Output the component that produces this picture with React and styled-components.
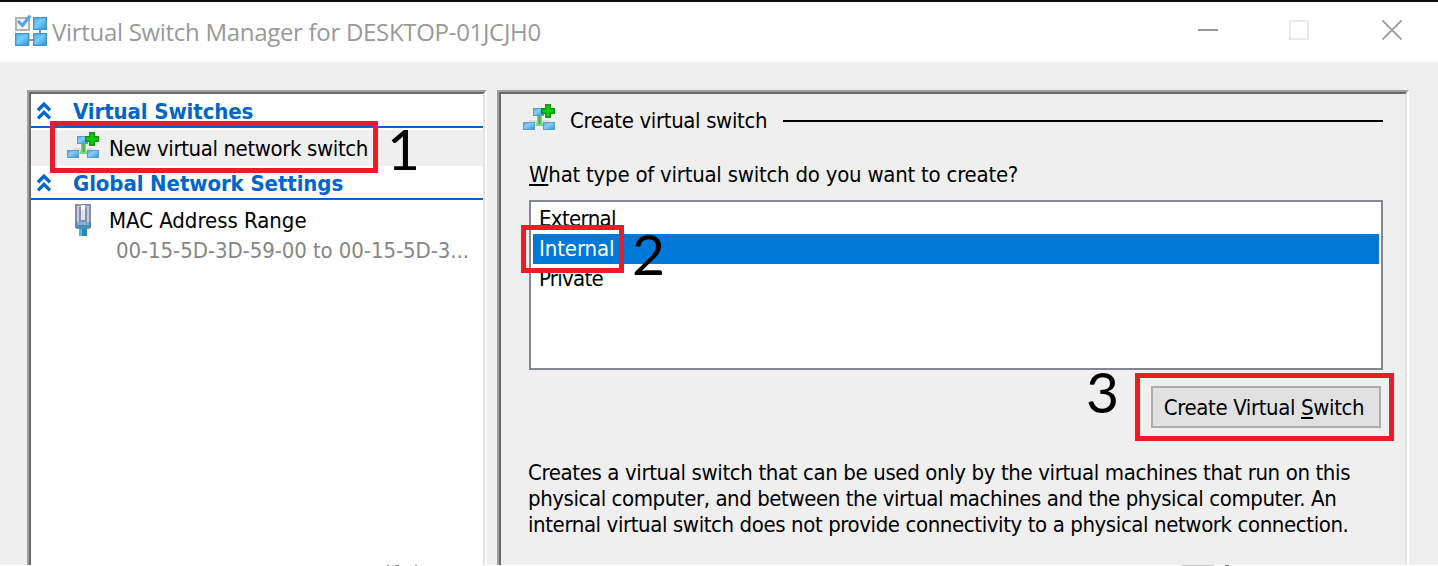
import React from "react";
import styled, { createGlobalStyle } from "styled-components";

const GlobalStyle = createGlobalStyle`
  * { box-sizing: border-box; }
  body { margin: 0; background: #fff; overflow: hidden; }
  svg { display: block; flex: none; }
`;

const Window = styled.div`
  position: relative;
  width: 1438px;
  height: 566px;
  overflow: hidden;
  display: flex;
  flex-direction: column;
  background: #fff;
  color: #000;
  font: 22px/26px "DejaVu Sans Condensed", "DejaVu Sans", sans-serif;
`;

const TitleBar = styled.header`
  flex: none;
  height: 62px;
  display: flex;
  align-items: flex-start;
  padding: 13px 36px 0 15px;
  border-top: 2px solid #0c0c0c;
`;

const Title = styled.h1`
  flex: 1;
  margin: 0 0 0 5px;
  font: 400 24px/34px "Open Sans", sans-serif;
  letter-spacing: -0.3px;
  color: #999;
`;

const Controls = styled.div`
  display: flex;
  gap: 71px;
  margin-top: 5px;

  svg:last-child { margin-left: 2px; }
`;

const Body = styled.main`
  height: 503px;
  flex: none;
  overflow: hidden;
  display: flex;
  gap: 10px;
  padding: 28px 29px 0 27px;
  background: #efefef;
`;

const Frame = styled.section`
  flex: none;
  width: ${(p) => p.$width}px;
  height: 520px;
  border: 2px solid;
  border-color: #a0a0a0 #fff #fff #a0a0a0;
`;

const FrameInner = styled.div`
  height: 100%;
  border: 2px solid;
  border-color: #696969 #e3e3e3 #e3e3e3 #696969;
  background: ${(p) => p.$fill};
`;

const SectionHeader = styled.h2`
  display: flex;
  align-items: flex-start;
  height: 34px;
  margin: 0;
  padding: 5px 0 0 6px;
  border-bottom: 2px solid #0066cc;
  color: #0066cc;
  font-size: 22px;
  line-height: 26px;
  font-weight: bold;
  letter-spacing: -0.1px;

  svg { margin-top: 3px; }
`;

const HeaderLabel = styled.span`
  margin-left: 22px;
`;

const TreeItem = styled.div`
  display: flex;
  height: 36px;
  margin-top: 2px;
  padding: 2px 0 0 36px;
  background: ${(p) => (p.$selected ? "#efefef" : "transparent")};
`;

const IconCell = styled.span`
  display: flex;
  justify-content: center;
  width: 32px;
`;

const TreeLabel = styled.span`
  margin: 4px 0 0 10px;
  letter-spacing: ${(p) => p.$track}px;
  white-space: nowrap;
`;

const TreeDetail = styled.div`
  padding: 0 0 0 85px;
  color: #868686;
  letter-spacing: -0.08px;
  white-space: nowrap;
`;

const GroupTitle = styled.div`
  display: flex;
  align-items: flex-start;
  padding: 10px 22px 0 22px;
  height: 67px;
`;

const GroupLabel = styled.span`
  width: 213px;
  margin: 4px 0 0 15px;
  letter-spacing: -0.36px;
`;

const Rule = styled.span`
  flex: 1;
  height: 2px;
  margin-top: 16px;
  background: #000;
`;

const Question = styled.label`
  display: block;
  height: 39px;
  padding: 1px 0 0 28px;
  letter-spacing: -0.24px;
`;

const Mnemonic = styled.span`
  text-decoration: underline;
  text-decoration-thickness: 2px;
  text-underline-offset: 2px;
  text-decoration-skip-ink: none;
`;

const ListBox = styled.div`
  width: 854px;
  height: 170px;
  margin-left: 28px;
  padding: 2px;
  border: 2px solid #828790;
  background: #fff;
`;

const Option = styled.div`
  height: 30px;
  padding-left: 6px;
  line-height: 30px;
  letter-spacing: ${(p) => p.$track}px;
  color: ${(p) => (p.$selected ? "#fff" : "#000")};
  background: ${(p) => (p.$selected ? "#0078d7" : "#fff")};
`;

const Actions = styled.div`
  display: flex;
  justify-content: flex-end;
  padding: 16px 24px 0 0;
`;

const Button = styled.button`
  width: 230px;
  height: 42px;
  padding: 2px 4px 0 0;
  border: 2px solid #adadad;
  background: #e1e1e1;
  color: #000;
  font: inherit;
  letter-spacing: -0.38px;
  white-space: nowrap;
`;

const Description = styled.p`
  margin: 32px 0 0 27px;
  white-space: nowrap;
`;

const Line = styled.span`
  display: block;
  letter-spacing: ${(p) => p.$track}px;
`;

const Highlight = styled.div`
  position: absolute;
  left: ${(p) => p.$x}px;
  top: ${(p) => p.$y}px;
  width: ${(p) => p.$w}px;
  height: ${(p) => p.$h}px;
  border: 5px solid #ed1c24;
`;

const Step = styled.div`
  position: absolute;
  left: ${(p) => p.$x}px;
  top: ${(p) => p.$y}px;
  font: 57px/60px Lato, sans-serif;
`;

const BottomEdge = styled.footer`
  flex: none;
  height: 1px;
  display: flex;
`;

const Speck = styled.span`
  width: ${(p) => p.$w}px;
  margin-left: ${(p) => p.$gap}px;
  background: ${(p) => p.$c};
`;

const AppIcon = () => (
  <svg width="32" height="32" viewBox="0 0 32 32">
    <defs>
      <linearGradient id="tile" x1="0" y1="0" x2="1" y2="1">
        <stop offset="0" stopColor="#4fb4f0" />
        <stop offset=".45" stopColor="#77cbfb" />
        <stop offset="1" stopColor="#2795e0" />
      </linearGradient>
    </defs>
    <path d="M25 14v5M13 25h6" stroke="#929292" strokeWidth="2" />
    <rect x="1" y="3" width="13" height="12" fill="#f1f1f1" stroke="#b2b2b2" strokeWidth="2" />
    <g fill="url(#tile)" stroke="#4794c4" strokeWidth="1.4">
      <rect x="18.7" y="2.7" width="12.6" height="11.6" />
      <rect x=".7" y="18.7" width="13" height="11.6" />
      <rect x="18.7" y="18.7" width="12.6" height="11.6" />
    </g>
    <path d="M3 6l4.5 4.5L15.2 .5" fill="none" stroke="#4ba3ee" strokeWidth="3" />
  </svg>
);

const SwitchIcon = () => (
  <svg width="32" height="28" viewBox="0 0 32 28">
    <defs>
      <linearGradient id="node" x1="0" y1="0" x2="1" y2="1">
        <stop offset="0" stopColor="#4aa3e0" />
        <stop offset=".4" stopColor="#8accf5" />
        <stop offset="1" stopColor="#1e94e0" />
      </linearGradient>
    </defs>
    <path d="M6 17.5h20" stroke="#dcdcdc" strokeWidth="3" />
    <path d="M14 12h5v6l2 4h-9l2-4z" fill="#7fd47c" />
    <path d="M16.5 12v8" stroke="#47ae48" strokeWidth="2" />
    <g fill="url(#node)" stroke="#5b9fc8" strokeWidth="1">
      <rect x="10.5" y="4.5" width="10" height="7" />
      <rect x=".5" y="18.5" width="11" height="7" />
      <rect x="20.5" y="18.5" width="11" height="7" />
    </g>
    <path d="M22 0h6v4h4v6h-4v4h-6v-4h-4V4h4z" fill="#129612" />
    <path d="M24 2h2v4h4v2h-4v4h-2V8h-4V6h4z" fill="#0bd20b" stroke="#0bd20b" />
  </svg>
);

const PlugIcon = () => (
  <svg width="16" height="32" viewBox="0 0 16 32">
    <path d="M4 24h8v8H4z" fill="#258dbd" />
    <path d="M4 24h3v8H4z" fill="#5ab4d5" />
    <path d="M1 1h14v22H1z" fill="#c4cbdc" stroke="#8490ab" strokeWidth="2" />
    <path d="M0 18h16v5l-2 2H2l-2-2z" fill="#4d8fb0" />
    <path d="M2 18h12v3H2z" fill="#77b3cb" />
    <rect x="5" y="4" width="6" height="13" fill="#dfe3ee" stroke="#8490ab" strokeWidth="2" />
    <path d="M6 1h4v5H6z" fill="#fff" />
  </svg>
);

const Chevrons = () => (
  <svg width="14" height="18" viewBox="0 0 14 18" fill="none" stroke="#0066cc" strokeWidth="3.4">
    <path d="M1 8.2L7 2.2l6 6M1 16.4l6-6 6 6" />
  </svg>
);

export default function App() {
  return (
    <Window>
      <GlobalStyle />
      <TitleBar>
        <AppIcon />
        <Title>Virtual Switch Manager for DESKTOP-01JCJH0</Title>
        <Controls>
          <svg width="20" height="20"><path d="M0 10h20" stroke="#999" strokeWidth="2" /></svg>
          <svg width="20" height="20"><rect x="1" y="1" width="18" height="18" fill="none" stroke="#ebebeb" strokeWidth="2" /></svg>
          <svg width="20" height="20"><path d="M.5 .5l19 19M19.5 .5l-19 19" stroke="#999" strokeWidth="1.8" /></svg>
        </Controls>
      </TitleBar>
      <Body>
        <Frame $width={460}>
          <FrameInner $fill="#fff">
            <SectionHeader>
              <Chevrons />
              <HeaderLabel>Virtual Switches</HeaderLabel>
            </SectionHeader>
            <TreeItem $selected>
              <IconCell><SwitchIcon /></IconCell>
              <TreeLabel $track={-0.38}>New virtual network switch</TreeLabel>
            </TreeItem>
            <SectionHeader>
              <Chevrons />
              <HeaderLabel>Global Network Settings</HeaderLabel>
            </SectionHeader>
            <TreeItem>
              <IconCell><PlugIcon /></IconCell>
              <TreeLabel $track={-0.03}>MAC Address Range</TreeLabel>
            </TreeItem>
            <TreeDetail>00-15-5D-3D-59-00 to 00-15-5D-3...</TreeDetail>
          </FrameInner>
        </Frame>
        <Frame $width={912}>
          <FrameInner $fill="#efefef">
            <GroupTitle>
              <SwitchIcon />
              <GroupLabel>Create virtual switch</GroupLabel>
              <Rule />
            </GroupTitle>
            <Question><Mnemonic>W</Mnemonic>hat type of virtual switch do you want to create?</Question>
            <ListBox>
              <Option $track={-0.65}>External</Option>
              <Option $track={-0.1} $selected>Internal</Option>
              <Option $track={-0.7}>Private</Option>
            </ListBox>
            <Actions>
              <Button>Create Virtual <Mnemonic>S</Mnemonic>witch</Button>
            </Actions>
            <Description>
              <Line $track={-0.375}>Creates a virtual switch that can be used only by the virtual machines that run on this</Line>
              <Line $track={-0.425}>physical computer, and between the virtual machines and the physical computer. An</Line>
              <Line $track={-0.4}>internal virtual switch does not provide connectivity to a physical network connection.</Line>
            </Description>
          </FrameInner>
        </Frame>
      </Body>
      <BottomEdge>
        <Speck $gap={387} $w={2} $c="#888" />
        <Speck $gap={0} $w={6} $c="#eee" />
        <Speck $gap={0} $w={2} $c="#999" />
        <Speck $gap={0} $w={2} $c="#666" />
        <Speck $gap={16} $w={2} $c="#999" />
        <Speck $gap={765} $w={32} $c="#c8c8c8" />
        <Speck $gap={11} $w={4} $c="#777" />
      </BottomEdge>
      <Highlight $x={50} $y={121} $w={328} $h={52} />
      <Highlight $x={521} $y={225} $w={103} $h={48} />
      <Highlight $x={1135} $y={373} $w={259} $h={68} />
      <Step $x={387} $y={118}>1</Step>
      <Step $x={632} $y={223}>2</Step>
      <Step $x={1086} $y={361}>3</Step>
    </Window>
  );
}
